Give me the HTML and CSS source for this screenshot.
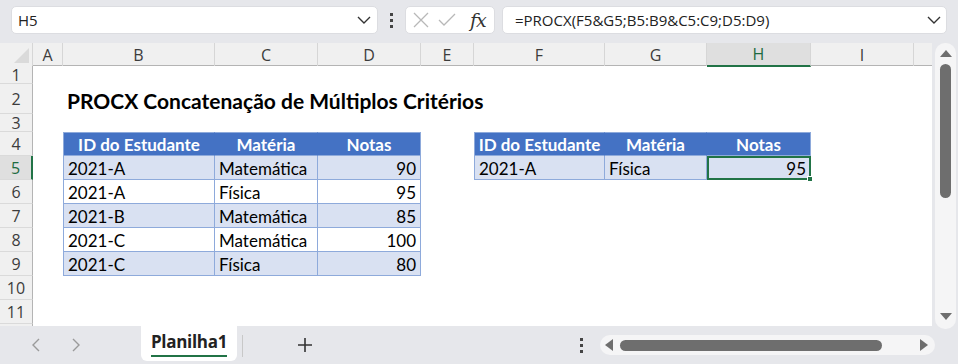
FILE: index.html
```html
<!DOCTYPE html>
<html lang="pt">
<head>
<meta charset="utf-8">
<title>PROCX</title>
<link rel="stylesheet" href="styles.css">
</head>
<body>
<div class="app">
  <div class="fbar">
    <div class="namebox">
      <span class="nb-text">H5</span>
      <svg class="chev" width="14" height="8" viewBox="0 0 14 8"><polyline points="1,1 7,7 13,1" fill="none" stroke="#333" stroke-width="1.4"/></svg>
    </div>
    <div class="vdots"><i></i><i></i><i></i></div>
    <div class="fxbox">
      <svg class="ico" width="16" height="16" viewBox="0 0 16 16"><path d="M1 1L15 15M15 1L1 15" stroke="#b8b8b8" stroke-width="1.3" fill="none"/></svg>
      <svg class="ico" width="18" height="14" viewBox="0 0 18 14"><polyline points="1,7 6,12 17,1" stroke="#b8b8b8" stroke-width="1.3" fill="none"/></svg>
      <span class="fx">fx</span>
    </div>
    <div class="formula">
      <span class="f-text">=PROCX(F5&amp;G5;B5:B9&amp;C5:C9;D5:D9)</span>
      <svg class="chev" width="14" height="8" viewBox="0 0 14 8"><polyline points="1,1 7,7 13,1" fill="none" stroke="#333" stroke-width="1.4"/></svg>
    </div>
  </div>

  <div class="main">
    <div class="sheet">
      <div class="row hdr">
        <div class="corner"><span class="tri"></span></div>
        <div class="ch">A</div><div class="ch">B</div><div class="ch">C</div><div class="ch">D</div><div class="ch">E</div>
        <div class="ch">F</div><div class="ch">G</div><div class="ch sel">H</div><div class="ch">I</div><div class="ch end"></div>
      </div>
      <div class="row h18"><div class="rh">1</div></div>
      <div class="row h30"><div class="rh">2</div><div></div><div class="title">PROCX Concatenação de Múltiplos Critérios</div></div>
      <div class="row h18"><div class="rh">3</div></div>
      <div class="row h24">
        <div class="rh">4</div><div></div>
        <div class="c th first">ID do Estudante</div><div class="c th">Matéria</div><div class="c th">Notas</div>
        <div></div>
        <div class="c th first">ID do Estudante</div><div class="c th">Matéria</div><div class="c th">Notas</div>
      </div>
      <div class="row h24">
        <div class="rh sel">5</div><div></div>
        <div class="c band first">2021-A</div><div class="c band">Matemática</div><div class="c band num">90</div>
        <div></div>
        <div class="c band first">2021-A</div><div class="c band">Física</div><div class="c band num active">95<span class="handle"></span></div>
      </div>
      <div class="row h24">
        <div class="rh">6</div><div></div>
        <div class="c first">2021-A</div><div class="c">Física</div><div class="c num">95</div>
      </div>
      <div class="row h24">
        <div class="rh">7</div><div></div>
        <div class="c band first">2021-B</div><div class="c band">Matemática</div><div class="c band num">85</div>
      </div>
      <div class="row h24">
        <div class="rh">8</div><div></div>
        <div class="c first">2021-C</div><div class="c">Matemática</div><div class="c num">100</div>
      </div>
      <div class="row h24">
        <div class="rh">9</div><div></div>
        <div class="c band first">2021-C</div><div class="c band">Física</div><div class="c band num">80</div>
      </div>
      <div class="row h24"><div class="rh">10</div></div>
      <div class="row h24"><div class="rh">11</div></div>
      <div class="row h24"><div class="rh"></div></div>
    </div>
    <div class="vscroll">
      <div class="vtrack">
        <span class="tri-up"></span>
        <span class="vthumb"></span>
        <span class="tri-down"></span>
      </div>
    </div>
  </div>

  <div class="tabbar">
    <div class="navs">
      <svg width="10" height="16" viewBox="0 0 10 16"><polyline points="8,2 2,8 8,14" fill="none" stroke="#9a9a9a" stroke-width="1.4"/></svg>
      <svg width="10" height="16" viewBox="0 0 10 16"><polyline points="2,2 8,8 2,14" fill="none" stroke="#9a9a9a" stroke-width="1.4"/></svg>
    </div>
    <div class="tab"><span class="tab-label">Planilha1</span></div>
    <div class="tsep"></div>
    <div class="plus">
      <svg width="16" height="16" viewBox="0 0 16 16"><path d="M8 1V15M1 8H15" stroke="#333" stroke-width="1.6"/></svg>
    </div>
    <div class="spacer"></div>
    <div class="vdots small"><i></i><i></i><i></i></div>
    <div class="htrack">
      <span class="tri-left"></span>
      <span class="hthumb"></span>
      <span class="tri-right"></span>
    </div>
  </div>
</div>
</body>
</html>
```

FILE: styles.css
```css
* { box-sizing: border-box; }
html, body { margin: 0; padding: 0; }
body { background: #e6e7eb; font-family: "Open Sans", "Noto Sans", sans-serif; }

.app {
  width: 958px;
  height: 364px;
  display: flex;
  flex-direction: column;
  overflow: hidden;
  background: #e6e7eb;
}

/* ---------- formula bar ---------- */
.fbar {
  height: 43px;
  flex: none;
  display: flex;
  align-items: flex-start;
  padding: 6px 11px 0 11px;
}
.namebox {
  width: 367px;
  height: 28px;
  background: #fff;
  border: 1px solid #dcdde1;
  border-radius: 5px;
  display: flex;
  align-items: center;
  padding: 0 6px 0 6px;
}
.nb-text {
  flex: 1;
  font-size: 15px;
  color: #222;
}
.chev { flex: none; }
.vdots {
  width: 27px;
  height: 28px;
  display: flex;
  flex-direction: column;
  align-items: center;
  justify-content: center;
  gap: 3px;
}
.vdots i {
  display: block;
  width: 3px;
  height: 3px;
  background: #444;
}
.fxbox {
  width: 90px;
  height: 28px;
  background: #fff;
  border: 1px solid #dcdde1;
  border-radius: 5px;
  display: flex;
  align-items: center;
  padding-left: 7px;
  gap: 9px;
}
.fx {
  font-family: "DejaVu Serif", "Liberation Serif", serif;
  font-style: italic;
  font-size: 19px;
  color: #333;
  margin-left: 5px;
  letter-spacing: -1px;
}
.formula {
  margin-left: 7px;
  width: 445px;
  height: 28px;
  background: #fff;
  border: 1px solid #dcdde1;
  border-radius: 5px;
  display: flex;
  align-items: center;
  padding: 0 5px 0 12px;
}
.f-text {
  flex: 1;
  font-size: 15px;
  color: #222;
}

/* ---------- sheet ---------- */
.main {
  height: 283px;
  flex: none;
  display: flex;
}
.sheet {
  width: 932px;
  height: 283px;
  background: #fff;
  overflow: hidden;
}
.row {
  display: grid;
  grid-template-columns: 33px 30px 152px 103px 103px 53px 131px 102px 104px 103px 18px;
}
.row.hdr { height: 23px; background: #f0f0f0; border-bottom: 1px solid #b4b4b4; }
.h18 { height: 18px; }
.h24 { height: 24px; }
.h30 { height: 30px; }

.corner {
  position: relative;
  background: #f0f0f0;
  border-right: 1px solid #d6d6d6;
}
.tri {
  position: absolute;
  right: 3px;
  bottom: 3px;
  width: 0;
  height: 0;
  border-left: 15px solid transparent;
  border-bottom: 15px solid #dadada;
}
.ch {
  display: flex;
  align-items: center;
  justify-content: center;
  font-size: 16px;
  color: #3c3c3c;
  border-right: 1px solid #d6d6d6;
}
.ch.end { border-right: none; }
.ch.sel {
  background: #dfdfdf;
  color: #1d6b41;
  border-bottom: 2px solid #217346;
  margin-bottom: -1px;
}
.rh {
  background: #f0f0f0;
  border-right: 1px solid #b4b4b4;
  border-bottom: 1px solid #dadada;
  display: flex;
  align-items: center;
  justify-content: center;
  font-size: 16px;
  line-height: 16px;
  color: #3c3c3c;
  padding-top: 1px;
}
.rh.sel {
  background: #dfdfdf;
  color: #1d6b41;
  border-right: 2px solid #217346;
}

.title {
  white-space: nowrap;
  font-family: "Lato", "Open Sans", sans-serif;
  font-weight: 700;
  font-size: 21px;
  color: #000;
  padding-left: 4px;
  display: flex;
  align-items: center;
  padding-top: 3px;
}

/* table cells */
.c {
  font-family: "Lato", "Open Sans", sans-serif;
  font-size: 17px;
  color: #000;
  display: flex;
  align-items: center;
  padding: 1px 4px 0 4px;
  white-space: nowrap;
  border-right: 1px solid #8eaadb;
  border-bottom: 1px solid #8eaadb;
}
.c.first { border-left: 1px solid #8eaadb; }
.c.th {
  background: #4472c4;
  color: #fff;
  font-weight: 700;
  justify-content: center;
  border-top: 1px solid #8eaadb;
  border-right-color: #4472c4;
}
.c.th:nth-child(5), .c.th:last-child { border-right-color: #8eaadb; }
.c.band { background: #d9e1f2; }
.c.num { justify-content: flex-end; }
.c.active {
  position: relative;
  outline: 2px solid #217346;
  outline-offset: -2px;
  border-color: #8eaadb;
}
.handle {
  position: absolute;
  right: -3px;
  bottom: -3px;
  width: 6px;
  height: 6px;
  background: #217346;
  border: 1px solid #fff;
}

/* ---------- vertical scroll ---------- */
.vscroll {
  width: 26px;
  height: 283px;
  padding: 0 2px 0 3px;
}
.vtrack {
  width: 21px;
  height: 286px;
  background: #f5f5f6;
  border-radius: 10px;
  display: flex;
  flex-direction: column;
  align-items: center;
  padding-top: 7px;
  position: relative;
  z-index: 1;
}
.tri-up {
  width: 0; height: 0;
  border-left: 6px solid transparent;
  border-right: 6px solid transparent;
  border-bottom: 7px solid #6e6e6e;
}
.vthumb {
  margin-top: 7px;
  width: 11px;
  height: 134px;
  background: #6e6e6e;
  border-radius: 6px;
}
.tri-down {
  margin-top: auto;
  margin-bottom: 9px;
  width: 0; height: 0;
  border-left: 6px solid transparent;
  border-right: 6px solid transparent;
  border-top: 7px solid #6e6e6e;
}

/* ---------- tab bar ---------- */
.tabbar {
  height: 38px;
  flex: none;
  display: flex;
  align-items: flex-start;
}
.navs {
  width: 141px;
  height: 38px;
  display: flex;
  align-items: center;
  padding-left: 31px;
  gap: 30px;
}
.tab {
  width: 96px;
  height: 35px;
  background: #fff;
  border-radius: 0 0 6px 6px;
  display: flex;
  justify-content: center;
  padding-top: 4px;
}
.tab-label {
  font-family: "Open Sans", sans-serif;
  font-weight: 700;
  font-size: 17px;
  color: #222;
  height: 27px;
  line-height: 24px;
  border-bottom: 2px solid #217346;
  letter-spacing: -0.3px;
}
.tsep {
  width: 1px;
  height: 22px;
  background: #c8c8c8;
  margin: 9px 0 0 5px;
}
.plus {
  width: 16px;
  height: 38px;
  margin-left: 54px;
  display: flex;
  align-items: center;
}
.spacer { flex: 1; }
.vdots.small {
  width: 6px;
  height: 38px;
  margin-right: 16px;
}
.vdots.small i { width: 3px; height: 3px; }
.htrack {
  width: 335px;
  height: 20px;
  margin-top: 9px;
  margin-right: 23px;
  background: #f5f5f6;
  border-radius: 10px;
  display: flex;
  align-items: center;
  padding: 0 7px 0 5px;
}
.tri-left {
  width: 0; height: 0;
  border-top: 6px solid transparent;
  border-bottom: 6px solid transparent;
  border-right: 8px solid #6e6e6e;
}
.hthumb {
  margin-left: 7px;
  width: 262px;
  height: 11px;
  background: #6e6e6e;
  border-radius: 6px;
}
.tri-right {
  margin-left: auto;
  width: 0; height: 0;
  border-top: 6px solid transparent;
  border-bottom: 6px solid transparent;
  border-left: 8px solid #6e6e6e;
}
```
